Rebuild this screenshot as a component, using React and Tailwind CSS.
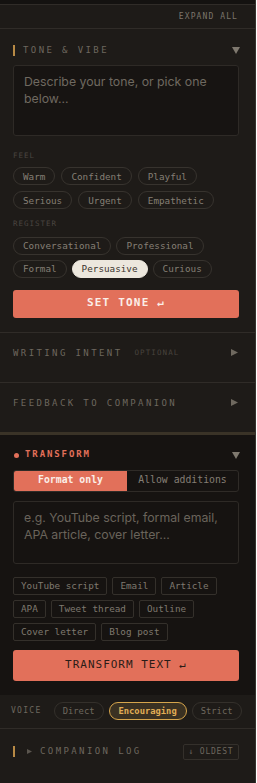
import { useState } from 'react';

const mono = "font-['DejaVu_Sans_Mono','Liberation_Mono',monospace]";
const sans = "font-['Inter','Noto_Sans',sans-serif]";

function Down() {
  return (
    <svg width="8" height="7" viewBox="0 0 8 7" className="mr-[-1px]">
      <path d="M0 0 H8 L4 7 Z" fill="#7f796f" />
    </svg>
  );
}

function Right({ size = 7, color = '#6f695f' }) {
  return (
    <svg width={size} height={size} viewBox="0 0 7 7">
      <path d="M0 0 L7 3.5 L0 7 Z" fill={color} />
    </svg>
  );
}

function Pill({ label, active, onClick }) {
  return (
    <button
      onClick={onClick}
      className={`${mono} h-[18px] px-[9px] rounded-full border text-[9.3px] leading-none ${
        active
          ? 'bg-[#ece7dd] border-[#ece7dd] text-[#3a342d]'
          : 'border-[#37332e] text-[#857f75]'
      }`}
    >
      {label}
    </button>
  );
}

function Tag({ label }) {
  return (
    <button
      className={`${mono} h-[18px] px-[7px] rounded-[2px] border border-[#34302b] text-[9.3px] leading-none text-[#7f796f]`}
    >
      {label}
    </button>
  );
}

export default function App() {
  const [feel, setFeel] = useState(null);
  const [register, setRegister] = useState('Persuasive');
  const [mode, setMode] = useState('format');
  const [voice, setVoice] = useState('Encouraging');

  const feels = ['Warm', 'Confident', 'Playful', 'Serious', 'Urgent', 'Empathetic'];
  const registers = ['Conversational', 'Professional', 'Formal', 'Persuasive', 'Curious'];
  const tags = ['YouTube script', 'Email', 'Article', 'APA', 'Tweet thread', 'Outline', 'Cover letter', 'Blog post'];

  return (
    <div className="w-[256px] min-h-[783px] bg-[#1e1b18] border-r border-[#36322d]">
      <div className="h-[5px] bg-[#141210] border-b border-[#302c28]" />
      <div className="h-[24px] flex items-center justify-end pr-[17px] border-b border-[#302c28]">
        <span className={`${mono} text-[8px] tracking-[1.1px] text-[#7b756b]`}>EXPAND ALL</span>
      </div>

      {/* tone & vibe */}
      <div className="pl-[13px] pr-[16px] pt-[15px] pb-[14px] border-b border-[#302c28]">
        <div className="h-[13px] flex items-center justify-between">
          <div className="flex items-center gap-[8px]">
            <span className="w-[2px] h-[11px] bg-[#b88a45]" />
            <span className={`${mono} text-[9px] tracking-[2.4px] text-[#6d675e]`}>TONE &amp; VIBE</span>
          </div>
          <Down />
        </div>
        <textarea
          className={`${sans} mt-[8px] w-full h-[71px] block resize-none rounded-[3px] bg-[#171412] border border-[#2e2a26] px-[10px] py-[7px] text-[12.3px] leading-[17px] text-[#d8d2c8] placeholder:text-[#6f6960] outline-none`}
          placeholder="Describe your tone, or pick one below..."
        />
        <div className={`${mono} mt-[14px] text-[7.5px] tracking-[1px] text-[#4a4540]`}>FEEL</div>
        <div className="mt-[6px] flex flex-wrap gap-x-[6px] gap-y-[6px] w-[215px]">
          {feels.map((f) => (
            <Pill key={f} label={f} active={feel === f} onClick={() => setFeel(f)} />
          ))}
        </div>
        <div className={`${mono} mt-[9px] text-[7.5px] tracking-[1px] text-[#4a4540]`}>REGISTER</div>
        <div className="mt-[7px] flex flex-wrap gap-x-[5px] gap-y-[5px] w-[215px]">
          {registers.map((r) => (
            <Pill key={r} label={r} active={register === r} onClick={() => setRegister(r)} />
          ))}
        </div>
        <button
          className={`${mono} mt-[12px] w-full h-[28px] rounded-[3px] bg-[#e2705a] text-[#fbeee8] text-[11px] font-bold tracking-[1.2px]`}
        >
          SET TONE ↵
        </button>
      </div>

      {/* writing intent */}
      <div className="h-[50px] pl-[13px] pr-[17px] pt-[14px] flex items-start justify-between border-b border-[#302c28]">
        <div className="h-[12px] flex items-center gap-[12px]">
          <span className={`${mono} text-[9px] leading-[12px] tracking-[2.4px] text-[#6d675e]`}>WRITING INTENT</span>
          <span className={`${mono} text-[7.5px] leading-[12px] tracking-[1.1px] text-[#48433d]`}>OPTIONAL</span>
        </div>
        <span className="h-[12px] flex items-center">
          <Right />
        </span>
      </div>

      {/* feedback */}
      <div className="h-[49px] pl-[13px] pr-[17px] pt-[14px] flex items-start justify-between">
        <span className={`${mono} text-[9px] leading-[12px] tracking-[2.4px] text-[#6d675e]`}>FEEDBACK TO COMPANION</span>
        <span className="h-[12px] flex items-center">
          <Right />
        </span>
      </div>

      {/* transform */}
      <div className="bg-[#161311] border-t-[3px] border-[#3a3327] pl-[13px] pr-[16px] pt-[14px] pb-[14px]">
        <div className="h-[13px] flex items-center justify-between">
          <div className="flex items-center gap-[6px]">
            <span className="w-[5px] h-[5px] ml-[1px] rounded-full bg-[#e2705a]" />
            <span className={`${mono} text-[9px] font-bold tracking-[1.9px] text-[#e2705a]`}>TRANSFORM</span>
          </div>
          <Down />
        </div>
        <div className="mt-[8px] h-[22px] flex rounded-[3px] border border-[#2f2b27] overflow-hidden">
          <button
            onClick={() => setMode('format')}
            className={`${mono} w-[113px] text-[9.8px] ${mode === 'format' ? 'bg-[#e2705a] text-[#fbeee8] font-bold' : 'text-[#847e74]'}`}
          >
            Format only
          </button>
          <button
            onClick={() => setMode('allow')}
            className={`${mono} flex-1 text-[9.8px] ${mode === 'allow' ? 'bg-[#e2705a] text-[#fbeee8] font-bold' : 'text-[#847e74]'}`}
          >
            Allow additions
          </button>
        </div>
        <textarea
          className={`${sans} mt-[9px] w-full h-[63px] block resize-none rounded-[3px] bg-[#161311] border border-[#2e2a26] px-[10px] py-[7px] text-[12.3px] leading-[17px] text-[#d8d2c8] placeholder:text-[#6a645b] outline-none`}
          placeholder="e.g. YouTube script, formal email, APA article, cover letter..."
        />
        <div className="mt-[13px] flex flex-wrap gap-x-[5px] gap-y-[5px] w-[220px]">
          {tags.map((t) => (
            <Tag key={t} label={t} />
          ))}
        </div>
        <button
          className={`${mono} mt-[9px] w-full h-[31px] rounded-[3px] bg-[#e2705a] text-[#2a1c17] text-[11px] tracking-[1px]`}
        >
          TRANSFORM TEXT ↵
        </button>
      </div>

      {/* voice */}
      <div className="h-[34px] pl-[11px] flex items-center gap-[12px] border-b border-[#302c28]">
        <span className={`${mono} text-[8px] tracking-[1.3px] text-[#6d675e]`}>VOICE</span>
        <div className="flex gap-[5px]">
          {['Direct', 'Encouraging', 'Strict'].map((v) => (
            <button
              key={v}
              onClick={() => setVoice(v)}
              className={`${mono} h-[18px] rounded-full border text-[8.8px] leading-none ${
                v === 'Encouraging' ? 'w-[78px]' : 'w-[50px]'
              } ${
                voice === v
                  ? 'border-[#d6a54c] bg-[#3a3122] text-[#e0ad55] font-bold'
                  : 'border-[#34302b] text-[#6f695f]'
              }`}
            >
              {v}
            </button>
          ))}
        </div>
      </div>

      {/* companion log */}
      <div className="pl-[13px] pr-[16px] pt-[15px] flex items-center justify-between">
        <div className="flex items-center">
          <span className="w-[2px] h-[11px] bg-[#b88a45]" />
          <span className="ml-[12px]">
            <Right size={5} color="#5a554e" />
          </span>
          <span className={`${mono} ml-[8px] text-[9px] tracking-[2.4px] text-[#6d675e]`}>COMPANION LOG</span>
        </div>
        <button
          className={`${mono} h-[16px] w-[56px] rounded-[2px] border border-[#34302b] text-[8px] tracking-[0.8px] text-[#6d675e]`}
        >
          ↓ OLDEST
        </button>
      </div>
    </div>
  );
}
